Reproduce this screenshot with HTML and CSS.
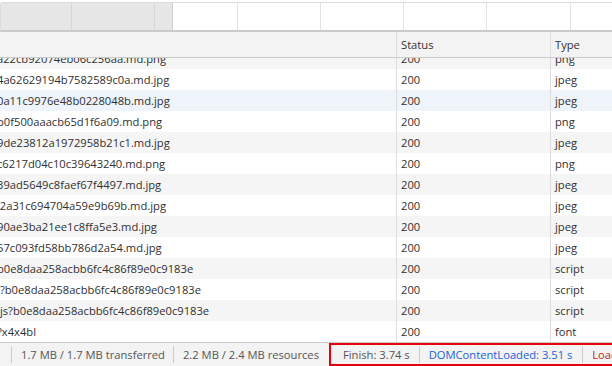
FILE: index.html
```html
<!DOCTYPE html>
<html>
<head>
<meta charset="utf-8">
<link rel="stylesheet" href="styles.css">
</head>
<body>
<div class="tabs">
  <div class="tab dim w71"></div>
  <div class="tab dim w83"></div>
  <div class="tab dim w18 last-dim"></div>
  <div class="tab w65"></div>
  <div class="tab w83"></div>
  <div class="tab w83"></div>
  <div class="tab w83"></div>
  <div class="tab w84"></div>
  <div class="tab grow"></div>
</div>
<div class="grid">
  <div class="row head">
    <div class="cell name"></div>
    <div class="cell status">Status</div>
    <div class="cell type">Type</div>
  </div>
  <div class="body">
    <div class="list">
      <div class="row alt"><div class="cell name">a22cb92074eb06c256aa.md.png</div><div class="cell status">200</div><div class="cell type">png</div></div>
      <div class="row"><div class="cell name">4a62629194b7582589c0a.md.jpg</div><div class="cell status">200</div><div class="cell type">jpeg</div></div>
      <div class="row hover"><div class="cell name">0a11c9976e48b0228048b.md.jpg</div><div class="cell status">200</div><div class="cell type">jpeg</div></div>
      <div class="row"><div class="cell name">b0f500aaacb65d1f6a09.md.png</div><div class="cell status">200</div><div class="cell type">png</div></div>
      <div class="row alt"><div class="cell name">9de23812a1972958b21c1.md.jpg</div><div class="cell status">200</div><div class="cell type">jpeg</div></div>
      <div class="row"><div class="cell name">c6217d04c10c39643240.md.png</div><div class="cell status">200</div><div class="cell type">png</div></div>
      <div class="row alt"><div class="cell name">39ad5649c8faef67f4497.md.jpg</div><div class="cell status">200</div><div class="cell type">jpeg</div></div>
      <div class="row"><div class="cell name">l2a31c694704a59e9b69b.md.jpg</div><div class="cell status">200</div><div class="cell type">jpeg</div></div>
      <div class="row alt"><div class="cell name">90ae3ba21ee1c8ffa5e3.md.jpg</div><div class="cell status">200</div><div class="cell type">jpeg</div></div>
      <div class="row"><div class="cell name">57c093fd58bb786d2a54.md.jpg</div><div class="cell status">200</div><div class="cell type">jpeg</div></div>
      <div class="row alt"><div class="cell name">b0e8daa258acbb6fc4c86f89e0c9183e</div><div class="cell status">200</div><div class="cell type">script</div></div>
      <div class="row"><div class="cell name">:?b0e8daa258acbb6fc4c86f89e0c9183e</div><div class="cell status">200</div><div class="cell type">script</div></div>
      <div class="row alt"><div class="cell name">.js?b0e8daa258acbb6fc4c86f89e0c9183e</div><div class="cell status">200</div><div class="cell type">script</div></div>
      <div class="row"><div class="cell name">?x4x4bl</div><div class="cell status">200</div><div class="cell type">font</div></div>
    </div>
  </div>
</div>
<div class="footer">
  <span class="item first">1.7 MB / 1.7 MB transferred</span>
  <span class="item">2.2 MB / 2.4 MB resources</span>
  <div class="timings">
    <span class="item plain">Finish: 3.74 s</span>
    <span class="item dcl">DOMContentLoaded: 3.51 s</span>
    <span class="item load">Load: 3.74 s</span>
  </div>
</div>
</body>
</html>
```
FILE: styles.css
```css
html, body {
  margin: 0;
  padding: 0;
  background: #ffffff;
  width: 612px;
  height: 366px;
  overflow: hidden;
  font-family: "Open Sans", "Noto Sans", sans-serif;
  font-size: 11.2px;
  color: #303030;
}

.tabs {
  margin-top: 2px;
  height: 27px;
  display: flex;
  border-top: 1px solid #dcdcdc;
  border-left: 1px solid #dcdcdc;
  border-bottom: 2px solid #cbcbcb;
  border-top-left-radius: 3px;
  overflow: hidden;
}
.tab {
  flex: none;
  height: 100%;
  border-right: 1px solid #e2e2e2;
  background: #ffffff;
}
.tab.dim {
  background: #e6e6e6;
  border-right-color: #d5d5d5;
}
.tab.last-dim { border-right-color: #cfcfcf; }
.w71 { width: 70px; }
.w83 { width: 82px; }
.w84 { width: 83px; }
.w18 { width: 17px; }
.w65 { width: 64px; }
.tab.grow { flex: 1; border-right: none; }

.row {
  display: grid;
  grid-template-columns: 397px 154px 1fr;
  height: 21px;
  line-height: 21px;
  white-space: nowrap;
}
.row.alt { background: #f5f5f5; }
.row.hover { background: #eff3fa; }

.row.head {
  height: 25px;
  line-height: 25px;
  background: #f3f3f3;
  border-bottom: 1px solid #cbcbcb;
  color: #333333;
}

.cell {
  overflow: hidden;
  padding-left: 4px;
}
.cell.name {
  padding-left: 0;
  border-right: 1px solid #dddddd;
  text-indent: -3px;
}
.cell.status {
  border-right: 1px solid #dddddd;
}

.body {
  height: 284px;
  overflow: hidden;
}
.list { margin-top: -10px; }

.footer {
  height: 23px;
  border-top: 1px solid #cbcbcb;
  background: #f3f3f3;
  display: flex;
  align-items: center;
  white-space: nowrap;
  overflow: hidden;
  padding-left: 11px;
  color: #555555;
}
.item {
  display: inline-block;
  flex: none;
  height: 17px;
  line-height: 17px;
  padding: 0 8px 0 9px;
  border-left: 1px solid #cccccc;
}
.timings {
  flex: none;
  display: flex;
  align-items: center;
  height: 19px;
  margin-left: 2px;
  padding-left: 4px;
  border: 2px solid #e8000a;
  border-right: none;
  align-self: flex-end;
}
.timings .item.plain { border-left: none; padding-left: 8px; padding-right: 9px; }
.timings .item.dcl { padding-right: 10px; }
.dcl { color: #1a62d6; }
.load { color: #c5221f; }
```
